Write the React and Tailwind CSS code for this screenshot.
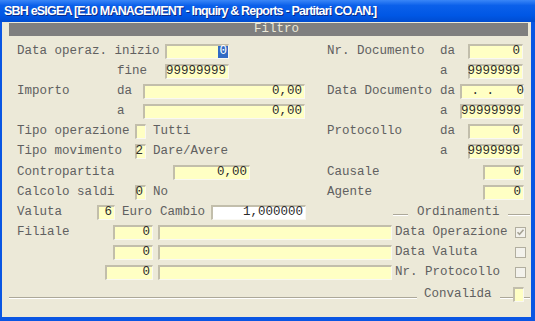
import clsx from "clsx";

function Lbl({ w, className, children }) {
  return (
    <span className={clsx("shrink-0 whitespace-pre leading-none text-[#606060]", w, className)}>
      {children}
    </span>
  );
}

function Gap({ w }) {
  return <span className={clsx("shrink-0 h-px", w)} />;
}

function Fld({ w, left, white, className, children }) {
  return (
    <div
      className={clsx(
        "shrink-0 h-[15px] flex items-center px-[2px] whitespace-pre leading-none text-[#2c2c2c]",
        "border-t-2 border-l-2 border-b border-r border-t-[#c2beab] border-l-[#c2beab] border-b-[#f9f8f2] border-r-[#f9f8f2]",
        left ? "justify-start" : "justify-end",
        white ? "bg-white" : "bg-[#ffffc4]",
        w,
        className
      )}
    >
      {children}
    </div>
  );
}

function Etch({ w, className }) {
  return <span className={clsx("shrink-0 h-[2px] border-t border-t-[#aca899] border-b border-b-white", w, className)} />;
}

function Check({ checked }) {
  return (
    <span className="shrink-0 w-[11px] h-[11px] border border-[#b1ae9f] bg-[#f3f2ec] flex items-center justify-center">
      {checked && (
        <svg width="9" height="9" viewBox="0 0 9 9">
          <path d="M1.5 4.2 L3.5 6.3 L7.5 1.8" fill="none" stroke="#a6a395" strokeWidth="1.6" />
        </svg>
      )}
    </span>
  );
}

function Row({ children, className }) {
  return <div className={clsx("flex items-center h-[20px]", className)}>{children}</div>;
}

export default function App() {
  return (
    <div className="w-[535px] h-[321px] bg-[#0a56e3] flex flex-col overflow-hidden">
      {/* title bar */}
      <div className="h-[22px] shrink-0 flex items-center pl-[4px] bg-[linear-gradient(180deg,#3a86f7_0%,#0b60ea_25%,#0057e5_70%,#004cd0_100%)]">
        <span className="text-white font-bold text-[12.5px] tracking-[-0.8px] font-['Liberation_Sans',Arial,sans-serif] whitespace-pre [text-shadow:1px_1px_#0b2a88]">
          SBH eSIGEA [E10 MANAGEMENT - Inquiry &amp; Reports - Partitari CO.AN.]
        </span>
      </div>

      <div className="flex-1 ml-[2px] mr-[4px] mb-[4px] bg-[#ece9d8] flex flex-col font-['Liberation_Mono','Courier_New',monospace] text-[12.5px]">
        <div className="mt-[1px] ml-[7px] mr-[3px] h-[13px] bg-[#7f7f7f] flex items-center justify-center pl-[16px]">
          <span className="text-[#ece9d8] leading-none">Filtro</span>
        </div>

        <div className="mt-[5px] pl-[15px] flex flex-col">
          <Row>
            <Lbl w="w-[148px]">Data operaz. inizio</Lbl>
            <Fld w="w-[64px]" className="pr-0">
              <span className="bg-[#316ac5] text-white h-full flex items-center px-[1px]">0</span>
            </Fld>
            <Gap w="w-[98px]" />
            <Lbl w="w-[113px]">Nr. Documento</Lbl>
            <Lbl w="w-[28px]">da</Lbl>
            <Fld w="w-[55px]">0</Fld>
          </Row>
          <Row>
            <Gap w="w-[100px]" />
            <Lbl w="w-[48px]">fine</Lbl>
            <Fld w="w-[64px]">99999999</Fld>
            <Gap w="w-[211px]" />
            <Lbl w="w-[28px]">a</Lbl>
            <Fld w="w-[55px]">9999999</Fld>
          </Row>
          <Row>
            <Lbl w="w-[100px]">Importo</Lbl>
            <Lbl w="w-[26px]">da</Lbl>
            <Fld w="w-[162px]">0,00</Fld>
            <Gap w="w-[22px]" />
            <Lbl w="w-[113px]">Data Documento</Lbl>
            <Lbl w="w-[20px]">da</Lbl>
            <Fld w="w-[64px]" left>{" . .   0"}</Fld>
          </Row>
          <Row>
            <Gap w="w-[100px]" />
            <Lbl w="w-[26px]">a</Lbl>
            <Fld w="w-[162px]">0,00</Fld>
            <Gap w="w-[135px]" />
            <Lbl w="w-[20px]">a</Lbl>
            <Fld w="w-[64px]">99999999</Fld>
          </Row>
          <Row>
            <Lbl w="w-[118px]">Tipo operazione</Lbl>
            <Fld w="w-[11px]" />
            <Lbl w="w-[174px]" className="ml-[7px]">Tutti</Lbl>
            <Lbl w="w-[113px]">Protocollo</Lbl>
            <Lbl w="w-[28px]">da</Lbl>
            <Fld w="w-[55px]">0</Fld>
          </Row>
          <Row>
            <Lbl w="w-[118px]">Tipo movimento</Lbl>
            <Fld w="w-[11px]" className="px-0 justify-center">2</Fld>
            <Lbl w="w-[174px]" className="ml-[7px]">Dare/Avere</Lbl>
            <Gap w="w-[113px]" />
            <Lbl w="w-[28px]">a</Lbl>
            <Fld w="w-[55px]">9999999</Fld>
          </Row>
          <Row className="mt-[1px]">
            <Lbl w="w-[156px]">Contropartita</Lbl>
            <Fld w="w-[77px]">0,00</Fld>
            <Gap w="w-[77px]" />
            <Lbl w="w-[156px]">Causale</Lbl>
            <Fld w="w-[41px]">0</Fld>
          </Row>
          <Row>
            <Lbl w="w-[118px]">Calcolo saldi</Lbl>
            <Fld w="w-[11px]" className="px-0 justify-center">0</Fld>
            <Lbl w="w-[174px]" className="ml-[7px]">No</Lbl>
            <Lbl w="w-[156px]">Agente</Lbl>
            <Fld w="w-[41px]">0</Fld>
          </Row>
          <Row>
            <Lbl w="w-[80px]">Valuta</Lbl>
            <Fld w="w-[18px]">6</Fld>
            <Lbl w="w-[38px]" className="ml-[7px]">Euro</Lbl>
            <Lbl w="w-[51px]">Cambio</Lbl>
            <Fld w="w-[95px]" white>1,000000</Fld>
            <Etch w="w-[15px]" className="ml-[87px] mt-[6px]" />
            <Lbl className="ml-[9px]">Ordinamenti</Lbl>
            <Etch w="w-[22px]" className="ml-[8px] mt-[6px]" />
          </Row>
          <Row>
            <Lbl w="w-[96px]">Filiale</Lbl>
            <Fld w="w-[40px]">0</Fld>
            <Fld w="w-[234px]" className="ml-[5px]" />
            <Lbl w="w-[120px]" className="ml-[3px]">Data Operazione</Lbl>
            <Check checked />
          </Row>
          <Row>
            <Gap w="w-[96px]" />
            <Fld w="w-[40px]">0</Fld>
            <Fld w="w-[234px]" className="ml-[5px]" />
            <Lbl w="w-[120px]" className="ml-[3px]">Data Valuta</Lbl>
            <Check />
          </Row>
          <Row>
            <Gap w="w-[88px]" />
            <Fld w="w-[48px]">0</Fld>
            <Fld w="w-[234px]" className="ml-[5px]" />
            <Lbl w="w-[120px]" className="ml-[3px]">Nr. Protocollo</Lbl>
            <Check />
          </Row>
        </div>

        <Row className="pl-[7px] mt-[2px]">
          <Etch w="w-[408px]" className="mt-[8px]" />
          <Lbl w="w-[76px]" className="ml-[7px]">Convalida</Lbl>
          <Etch w="w-[13px]" className="mt-[8px]" />
          <Fld w="w-[11px]" />
          <Etch w="w-[6px]" className="mt-[8px]" />
        </Row>
      </div>
    </div>
  );
}
